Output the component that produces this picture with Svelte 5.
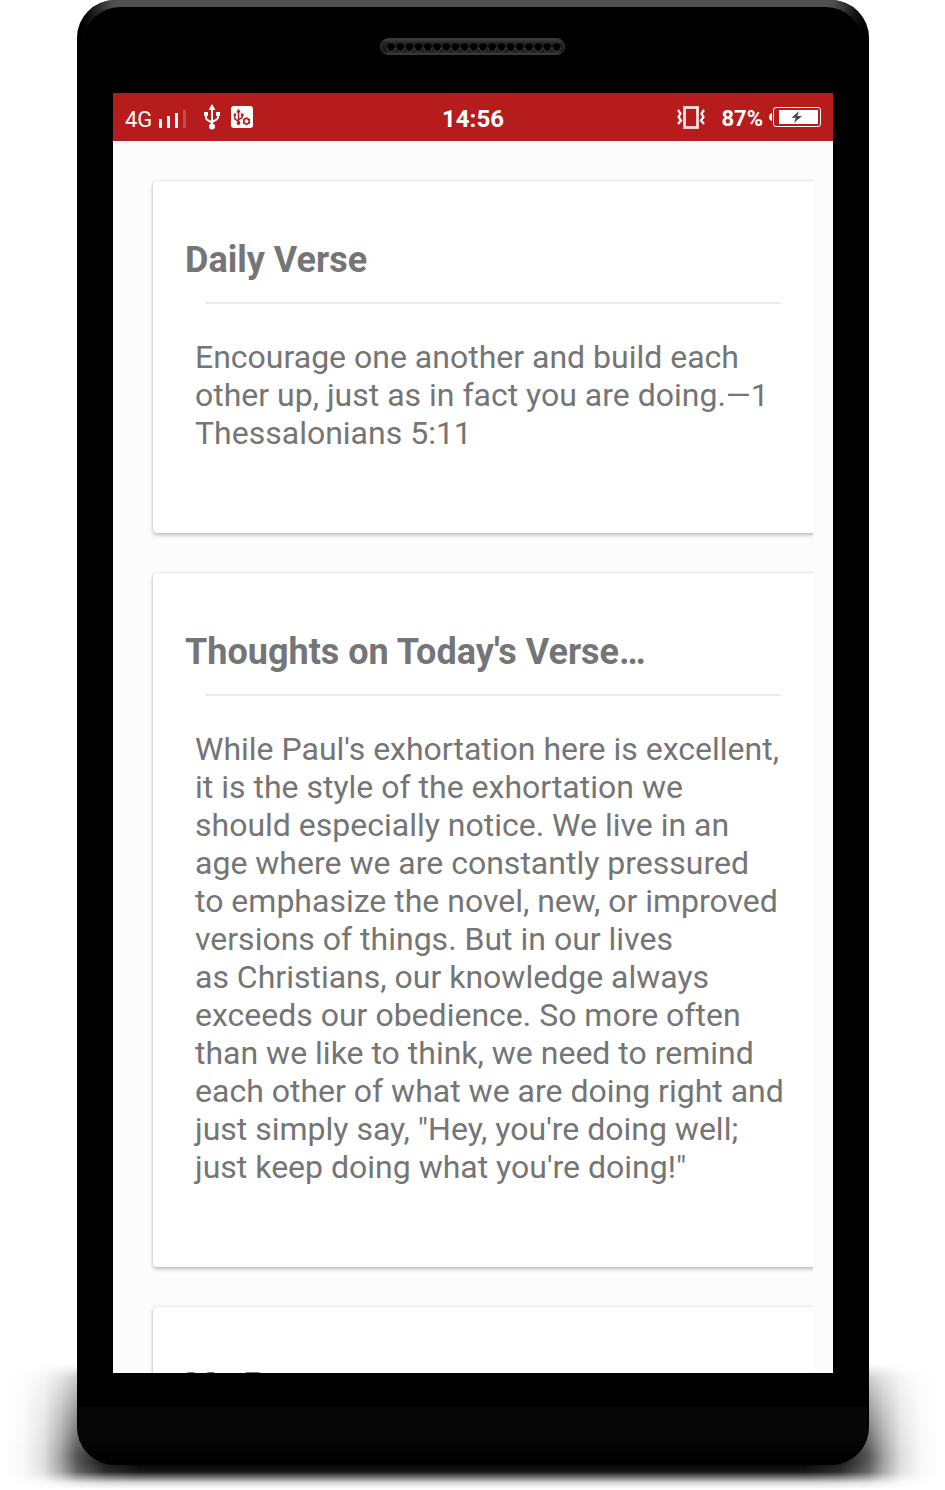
<script>
	const cards = [
		{
			title: 'Daily Verse',
			text: 'Encourage one another and build each other up, just as in fact you are doing.\u20141 Thessalonians 5:11'
		},
		{
			title: "Thoughts on Today's Verse\u2026",
			text: 'While Paul\'s exhortation here is excellent, it is the style of the exhortation we should especially notice. We live in an age where we are constantly pressured to emphasize the novel, new, or improved versions of things. But in our lives as\u00a0Christians, our knowledge always exceeds our obedience. So more often than we like to think, we need to remind each other of what we are doing right and just simply say, "Hey, you\'re doing well; just keep doing what you\'re doing!"'
		},
		{ title: 'My Prayer\u2026', text: '' }
	];
	const holes = Array.from({ length: 19 }, (_, i) => 11 + i * 9.2);
</script>

<div class="page">
	<div class="phone">
		<div class="gloss"></div>
		<div class="bezel">
			<svg class="speaker" width="186" height="18" viewBox="0 0 186 18" aria-hidden="true">
				<defs>
					<linearGradient id="slot" x1="0" y1="0" x2="0" y2="1">
						<stop offset="0" stop-color="#444" />
						<stop offset="0.3" stop-color="#222" />
						<stop offset="0.8" stop-color="#181818" />
						<stop offset="1" stop-color="#484848" />
					</linearGradient>
				</defs>
				<rect x="0.5" y="0.5" width="184" height="16" rx="8" fill="url(#slot)" stroke="#383838" />
				{#each holes as x}
					<circle cx={x} cy="9.5" r="4" fill="#000" />
					<path d="M{x - 4} 9.5a4 4 0 0 0 8 0" fill="none" stroke="#4a4a4a" stroke-width="0.9" />
				{/each}
			</svg>
		</div>
		<main class="screen">
			<header class="status">
				<div class="side">
					<span class="network">4G</span>
					<svg class="signal" width="28" height="18" viewBox="0 0 28 18" aria-hidden="true">
						<path d="M0 9h3v9H0zM8 6h3v12H8zM16 3h3v15h-3z" fill="#fff" />
						<path d="M24 0h3v18h-3z" fill="#c74a4a" />
					</svg>
					<svg class="usb" width="16" height="26" viewBox="0 0 16 26" aria-hidden="true">
						<g fill="none" stroke="#fff" stroke-width="2">
							<path d="M8 4v19M2 11v2.500q0 2 2 2.800L8 18.500M14 11v2q0 2-2 2.800L8 18" />
						</g>
						<path d="M8 0l3.500 6h-7zM0 8h4v4H0zM12 8h4v4h-4z" fill="#fff" />
						<circle cx="8" cy="22.500" r="3" fill="#fff" />
					</svg>
					<svg class="debug" width="22" height="22" viewBox="0 0 22 22" aria-hidden="true">
						<rect width="22" height="22" rx="3" fill="#fff" />
						<g fill="none" stroke="#b71c1c" stroke-width="1.500">
							<path d="M7.500 5v12M3.700 9v3q0 1.200 1.200 1.700l2.600 1.300M11.300 9v1.500q0 1.200-1.200 1.700L7.500 13.500" />
							<circle cx="15.500" cy="15.300" r="2.700" />
							<path d="M15.500 11.300v1.500M15.500 17.800v1.500M12 13.300l1.300.8M17.700 16.500l1.300.8M12 17.300l1.300-.8M17.700 14.100l1.300-.8" />
						</g>
						<path d="M7.500 2.500l2.300 4H5.200zM2.700 7.500h2.300v2.500H2.700zM10 7.500h2.500v2.500H10z" fill="#b71c1c" />
						<circle cx="7.500" cy="17" r="1.900" fill="#b71c1c" />
					</svg>
				</div>
				<time class="clock">14:56</time>
				<div class="side end">
					<svg class="vibrate" width="28" height="23" viewBox="0 0 28 23" aria-hidden="true">
						<rect x="7.500" y="1.500" width="13" height="20" fill="none" stroke="#f7e1e1" stroke-width="2.800" />
						<path d="M1 4l2.500 3.500-2 3.500 2.500 3.500-3 3.500M27 4l-2.500 3.500 2 3.500-2.500 3.500 3 3.500" fill="none" stroke="#fff" stroke-width="2.200" />
					</svg>
					<span class="percent">87%</span>
					<svg class="battery" width="52" height="20" viewBox="0 0 52 20" aria-hidden="true">
						<path d="M3 6v8q-3-1-3-4t3-4z" fill="#fff" />
						<rect x="4.500" y="0.500" width="47" height="19" rx="2.500" fill="none" stroke="#fff" />
						<path d="M10 3h39v14H10z" fill="#fff" />
						<path d="M30 4l-7.500 6.800h4.300L25 16l8-7h-4.700z" fill="#484848" />
					</svg>
				</div>
			</header>
			<div class="list">
				{#each cards as card}
					<article class="card">
						<h2>{card.title}</h2>
						<hr />
						<p>{card.text}</p>
					</article>
				{/each}
			</div>
		</main>
		<div class="chin"></div>
	</div>
</div>

<style>
	:global(body) {
		margin: 0;
		background: #fff;
	}

	.page {
		position: relative;
		display: flex;
		flex-direction: column;
		height: 100vh;
		box-sizing: border-box;
		padding: 0 76px 25px 77px;
		overflow: hidden;
		font-family: Roboto, sans-serif;
	}

	/* soft floor shadow behind the lower part of the phone */
	.page::before {
		content: '';
		position: absolute;
		left: 0;
		right: 0;
		bottom: 0;
		height: 126px;
		background: linear-gradient(90deg, transparent 5px, rgba(0,0,0,0.03) 25px, rgba(0,0,0,0.13) 44px, rgba(0,0,0,0.36) 61px, rgba(0,0,0,0.66) 77px, rgba(0,0,0,0.9) 105px, #000 140px, #000 calc(100% - 140px), rgba(0,0,0,0.9) calc(100% - 105px), rgba(0,0,0,0.66) calc(100% - 77px), rgba(0,0,0,0.36) calc(100% - 61px), rgba(0,0,0,0.13) calc(100% - 44px), rgba(0,0,0,0.03) calc(100% - 25px), transparent calc(100% - 5px));
		mask-image: linear-gradient(transparent 0, rgba(0,0,0,0.12) 6px, rgba(0,0,0,0.3) 14px, rgba(0,0,0,0.55) 40px, #000 90px, #000 98px, rgba(0,0,0,0.9) 108px, rgba(0,0,0,0.5) 114px, rgba(0,0,0,0.15) 119px, transparent 125px);
	}

	.phone {
		position: relative;
		display: flex;
		flex-direction: column;
		flex: 1;
		min-height: 0;
		padding: 0 36px;
		background: #000;
		border-radius: 38px;
		overflow: hidden;
	}

	.gloss {
		position: absolute;
		inset: 0 0 auto;
		height: 48px;
		background: linear-gradient(90deg, #000 4px, #505050 36px, #505050 calc(100% - 36px), #000 calc(100% - 4px));
		mask-image: linear-gradient(#000 8px, transparent 44px);
	}

	.gloss::after {
		content: '';
		position: absolute;
		inset: 7px 7px 0;
		background: #000;
		border-radius: 36px 36px 0 0;
	}

	.bezel {
		position: relative;
		flex: none;
		display: flex;
		justify-content: center;
		height: 55px;
		padding-top: 38px;
	}

	.screen {
		display: flex;
		flex-direction: column;
		flex: 1;
		min-height: 0;
		overflow: hidden;
		background: #fcfcfc;
	}

	.status {
		flex: none;
		display: grid;
		grid-template-columns: 1fr auto 1fr;
		align-items: center;
		height: 48px;
		padding: 0 12px;
		background: #b71c1c;
		color: #fff;
	}

	.side {
		display: flex;
		align-items: center;
	}

	.end {
		justify-content: flex-end;
	}

	.network {
		font-size: 22px;
		line-height: 28px;
		padding-top: 6px;
	}

	.signal {
		margin: 4px 17px 0 7px;
	}

	.debug {
		margin-left: 11px;
	}

	.clock {
		font-size: 24px;
		font-weight: 700;
		line-height: 28px;
		padding-top: 4px;
	}

	.percent {
		font-size: 22px;
		font-weight: 700;
		line-height: 28px;
		padding-top: 4px;
		margin: 0 6px 0 16px;
	}

	.list {
		flex: 1;
		min-height: 0;
		margin-right: 20px;
		padding: 40px 0 0 40px;
		overflow: hidden;
		color: #757575;
	}

	/* cards run past the right edge of the list and are cut there */
	.card {
		margin: 0 -20px 40px 0;
		padding: 58px 48px 81px 32px;
		background: #fff;
		border-radius: 4px;
		box-shadow: 0 2px 4px rgba(0,0,0,0.24), 0 0 2px rgba(0,0,0,0.16);
	}

	h2 {
		margin: 0;
		font-size: 36px;
		font-weight: 700;
		line-height: 42px;
	}

	hr {
		height: 2px;
		margin: 21px 4px 34px 20px;
		border: 0;
		background: #ebebeb;
	}

	p {
		margin: 0 0 0 10px;
		font-size: 32px;
		line-height: 38px;
	}

	.chin {
		flex: none;
		height: 58px;
		margin: 34px -34px 0;
		background: linear-gradient(#070707 50%, #000);
	}
</style>
